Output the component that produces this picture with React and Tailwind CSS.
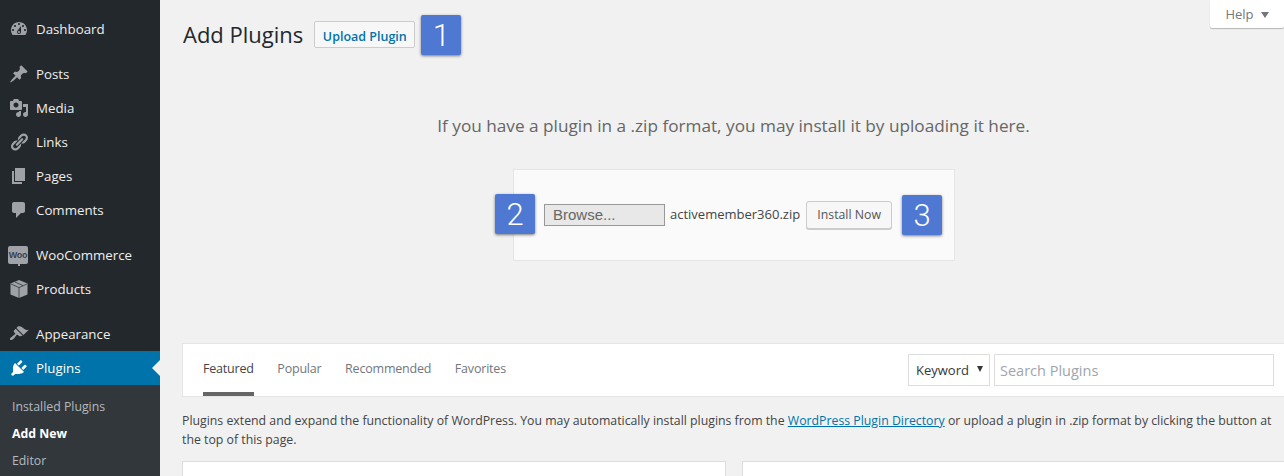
const font = "font-['Open_Sans',sans-serif]";

const icons = {
  dashboard:
    "M3.76 16h12.48c1.1-1.37 1.76-3.11 1.76-5 0-4.42-3.58-8-8-8s-8 3.58-8 8c0 1.89.66 3.63 1.76 5zM10 4c.55 0 1 .45 1 1s-.45 1-1 1-1-.45-1-1 .45-1 1-1zM6 6c.55 0 1 .45 1 1s-.45 1-1 1-1-.45-1-1 .45-1 1-1zm8 0c.55 0 1 .45 1 1s-.45 1-1 1-1-.45-1-1 .45-1 1-1zm-5.37 5.55L12 7v6c0 1.1-.9 2-2 2s-2-.9-2-2c0-.57.24-1.08.63-1.45zM4 10c.55 0 1 .45 1 1s-.45 1-1 1-1-.45-1-1 .45-1 1-1zm12 0c.55 0 1 .45 1 1s-.45 1-1 1-1-.45-1-1 .45-1 1-1zm-5 3c0-.55-.45-1-1-1s-1 .45-1 1 .45 1 1 1 1-.45 1-1z",
  posts:
    "M10.44 3.02l1.82-1.82 6.36 6.35-1.83 1.82c-1.05-.68-2.48-.57-3.41.36l-.75.75c-.92.93-1.04 2.35-.35 3.41l-1.83 1.82-2.41-2.41-2.8 2.79c-.42.42-3.38 2.71-3.8 2.29s1.86-3.39 2.28-3.81l2.79-2.79L4.1 9.36l1.83-1.82c1.05.69 2.48.57 3.4-.36l.75-.75c.93-.92 1.05-2.35.36-3.41z",
  media:
    "M13 11V4c0-.55-.45-1-1-1h-1.67L9 1H5L3.67 3H2c-.55 0-1 .45-1 1v7c0 .55.45 1 1 1h10c.55 0 1-.45 1-1zM7 4.5c1.38 0 2.5 1.12 2.5 2.5S8.38 9.5 7 9.5 4.5 8.38 4.5 7 5.62 4.5 7 4.5zM14 6h5v10.5c0 1.38-1.12 2.5-2.5 2.5S14 17.88 14 16.5s1.12-2.5 2.5-2.5c.17 0 .34.02.5.05V9h-3V6zm-4 8.05V13h2v3.5c0 1.38-1.12 2.5-2.5 2.5S7 17.88 7 16.5 8.12 14 9.5 14c.17 0 .34.02.5.05z",
  links:
    "M17.74 2.76c1.68 1.69 1.68 4.41 0 6.1l-1.53 1.52c-1.12 1.12-2.7 1.47-4.14 1.09l2.62-2.61.76-.77.76-.76c.84-.84.84-2.2 0-3.04-.84-.85-2.2-.85-3.04 0l-.77.76-3.38 3.38c-.37-1.44-.02-3.02 1.1-4.14l1.52-1.53c1.69-1.68 4.42-1.68 6.1 0zM8.59 13.43l5.34-5.34c.42-.42.42-1.1 0-1.52-.44-.43-1.13-.39-1.53 0l-5.33 5.34c-.42.42-.42 1.1 0 1.52.44.43 1.13.39 1.52 0zm-.76 2.29l4.14-4.15c.38 1.44.03 3.02-1.09 4.14l-1.52 1.53c-1.69 1.68-4.41 1.68-6.1 0-1.68-1.68-1.68-4.42 0-6.1l1.53-1.52c1.12-1.12 2.7-1.47 4.14-1.1l-4.14 4.15c-.85.84-.85 2.2 0 3.05.84.84 2.2.84 3.04 0z",
  pages: "M6 15V2h10v13H6zm-1 1h8v2H3V5h2v11z",
  comments:
    "M5 2h9c1.1 0 2 .9 2 2v7c0 1.1-.9 2-2 2h-2l-5 5v-5H5c-1.1 0-2-.9-2-2V4c0-1.1.9-2 2-2z",
  appearance:
    "M14.48 11.06L7.41 3.99l1.5-1.5c.5-.56 2.3-.47 3.51.32 1.21.8 1.43 1.28 2.91 2.1 1.18.64 2.45 1.26 4.45.85zm-.71.71L6.7 4.7 4.93 6.47c-.39.39-.39 1.02 0 1.41l1.06 1.06c.39.39.39 1.03 0 1.42-.6.6-1.43 1.11-2.21 1.69-.35.26-.7.53-1.01.84C1.43 13.23.4 14.98 1.2 15.8c.87.8 2.57-.2 3.9-1.6.3-.3.57-.66.82-1.02.57-.78 1.05-1.6 1.66-2.21.39-.39 1.03-.39 1.42 0l1.06 1.06c.39.39 1.02.39 1.41 0z",
  plugins:
    "M13.11 4.36L9.87 7.6 8 5.73l3.24-3.24c.35-.34 1.05-.2 1.56.32.52.51.66 1.21.31 1.55zm-8 1.77l.91-1.12 9.01 9.01-1.19.84c-.71.71-2.63 1.16-3.82 1.16H6.14L4.9 17.26c-.59.59-1.54.59-2.12 0-.59-.58-.59-1.53 0-2.12l1.24-1.24v-3.88c0-1.13.4-3.19 1.09-3.89zm7.26 3.97l3.24-3.24c.34-.35 1.04-.21 1.55.31.52.51.66 1.21.31 1.55l-3.24 3.25z",
};

function Dashicon({ name, className }) {
  return (
    <svg viewBox="0 0 20 20" className={`h-5 w-5 fill-current ${className}`}>
      <path d={icons[name]} />
    </svg>
  );
}

function WooIcon() {
  return (
    <span className="relative -ml-px flex h-[18px] w-5 items-center justify-center rounded-[2px] bg-[#9fa3a7]">
      <span className="font-['Liberation_Sans',sans-serif] text-[9px] leading-none font-bold tracking-[-0.3px] text-[#3a3f52]">
        Woo
      </span>
      <span className="absolute -bottom-[2px] left-[10px] h-[3px] w-[2px] bg-[#9fa3a7]" />
    </span>
  );
}

function BoxIcon() {
  return (
    <svg viewBox="0 0 20 20" className="h-5 w-5 text-[#9fa3a7]">
      <path d="M10 1l8.5 3.6v10.8L10 19l-8.5-3.6V4.6z" fill="currentColor" />
      <path d="M2 5l8 3.6L18 5M10 8.6V19M6 3l8 3.6" fill="none" stroke="#23282d" strokeWidth="0.7" />
    </svg>
  );
}

function MenuItem({ icon, custom, label, active }) {
  return (
    <div
      className={`relative flex h-[34px] items-center pl-[9px] text-[13.3px] ${
        active ? "bg-[#0073aa] text-white" : "text-[#eeeeee]"
      }`}
    >
      {custom || (
        <Dashicon name={icon} className={active ? "text-white" : "text-[#9fa3a7]"} />
      )}
      <span className={`pt-[2px] ${custom && custom.type === WooIcon ? "ml-[8px]" : "ml-[7px]"}`}>{label}</span>
      {active ? (
        <span className="absolute top-1/2 right-0 -mt-2 h-0 w-0 border-y-8 border-r-8 border-y-transparent border-r-[#f1f1f1]" />
      ) : null}
    </div>
  );
}

function Sidebar() {
  return (
    <aside className="w-40 shrink-0 bg-[#23282d] pt-3">
      <MenuItem icon="dashboard" label="Dashboard" />
      <div className="mt-[11px]">
        <MenuItem icon="posts" label="Posts" />
        <MenuItem icon="media" label="Media" />
        <MenuItem icon="links" label="Links" />
        <MenuItem icon="pages" label="Pages" />
        <MenuItem icon="comments" label="Comments" />
      </div>
      <div className="mt-[11px]">
        <MenuItem custom={<WooIcon />} label="WooCommerce" />
        <MenuItem custom={<BoxIcon />} label="Products" />
      </div>
      <div className="mt-[11px]">
        <MenuItem icon="appearance" label="Appearance" />
        <MenuItem icon="plugins" label="Plugins" active />
      </div>
      <div className="h-full bg-[#32373c] pt-[8px] pl-3 text-[12.3px] leading-[27px] text-[#b4b9be]">
        <div>Installed Plugins</div>
        <div className="font-bold text-white">Add New</div>
        <div>Editor</div>
      </div>
    </aside>
  );
}

function Badge({ children, className = "" }) {
  return (
    <span
      className={`flex h-10 w-10 items-center justify-center rounded-[2px] bg-[#4f78d2] font-['Roboto',sans-serif] text-[31px] leading-none font-light text-white shadow-[0_1px_3px_rgba(0,0,0,0.5)] ${className}`}
    >
      {children}
    </span>
  );
}

export default function App() {
  return (
    <div className={`flex h-[476px] overflow-hidden bg-[#f1f1f1] text-[#444444] ${font}`}>
      <Sidebar />
      <main className="relative min-w-0 flex-1 pl-[22px]">
        <div className="absolute top-0 right-0 flex h-7 w-[74px] items-center justify-center gap-[7px] rounded-b-[2px] bg-white pt-[2px] text-[13px] text-[#72777c] shadow-[0_1px_1px_rgba(0,0,0,0.25)]">
          Help
          <span className="h-0 w-0 border-x-[4px] border-t-[6px] border-x-transparent border-t-[#72777c]" />
        </div>

        <header className="flex items-start pt-[15px]">
          <h1 className="mt-[3px] ml-px text-[22px] leading-8 text-[#23282d]">Add Plugins</h1>
          <button className="mt-[6px] ml-[11px] h-[27px] w-[101px] rounded-[2px] border border-[#cccccc] bg-[#f7f7f7] pt-[4px] text-[12.5px] leading-[18px] font-semibold text-[#0073aa]">
            Upload Plugin
          </button>
          <Badge className="ml-[6px]">1</Badge>
        </header>

        <p className="mt-[59px] pl-px text-center text-[17.2px] leading-6 text-[#666666]">
          If you have a plugin in a .zip format, you may install it by uploading it here.
        </p>

        <div className="relative mt-[31px] ml-[331px] flex h-[92px] w-[442px] items-center border border-[#e5e5e5] bg-[#fafafa] pl-[30px]">
          <Badge className="absolute top-[24px] -left-[19px]">2</Badge>
          <span className="flex h-[22px] w-[121px] items-center border border-[#999999] bg-[#e8e8e8] pl-2 font-['Liberation_Sans',sans-serif] text-[15px] text-[#666666]">
            Browse...
          </span>
          <span className="ml-[5px] text-[13px] text-[#444444]">activemember360.zip</span>
          <button className="ml-[6px] h-7 w-[86px] rounded-[3px] border border-[#cccccc] bg-[#f7f7f7] text-[12.3px] text-[#555555] shadow-[0_1px_0_#cccccc]">
            Install Now
          </button>
          <Badge className="absolute top-[25px] left-[388px]">3</Badge>
        </div>

        <div className="mt-[82px] -mr-4 flex h-[54px] items-center justify-between border border-[#e5e5e5] bg-white pr-[25px] pl-5 text-[12.5px] tracking-[-0.2px] text-[#72777c]">
          <nav className="flex h-full items-stretch gap-[23.6px]">
            <span className="flex items-center border-b-4 border-[#666666] pt-[3px] text-[#444444]">
              Featured
            </span>
            <span className="flex items-center border-b-4 border-transparent pt-[3px]">Popular</span>
            <span className="flex items-center border-b-4 border-transparent pt-[3px]">Recommended</span>
            <span className="flex items-center border-b-4 border-transparent pt-[3px]">Favorites</span>
          </nav>
          <div className="flex gap-1 tracking-normal">
            <span className="relative flex h-8 w-[82px] items-center border border-[#dddddd] pt-px pl-[7px] text-[13px] text-[#32373c]">
              Keyword
              <span className="absolute top-[11px] right-[6px] h-0 w-0 border-x-[3.5px] border-t-[6px] border-x-transparent border-t-[#32373c]" />
            </span>
            <span className="flex h-8 w-[280px] items-center border border-[#dddddd] pt-px pl-[5px] text-[14.5px] text-[#a0a5aa]">
              Search Plugins
            </span>
          </div>
        </div>

        <p className="mt-[14px] text-[12.3px] leading-[19px] text-[#444444]">
          Plugins extend and expand the functionality of WordPress. You may automatically install plugins from the{" "}
          <a className="text-[#0073aa] underline">WordPress Plugin Directory</a> or upload a plugin in .zip format by
          clicking the button at the top of this page.
        </p>

        <div className="mt-[12px] -mr-4 grid grid-cols-[544px_1fr] gap-4">
          <div className="h-40 border border-[#dddddd] bg-white" />
          <div className="h-40 border border-[#dddddd] bg-white" />
        </div>
      </main>
    </div>
  );
}
